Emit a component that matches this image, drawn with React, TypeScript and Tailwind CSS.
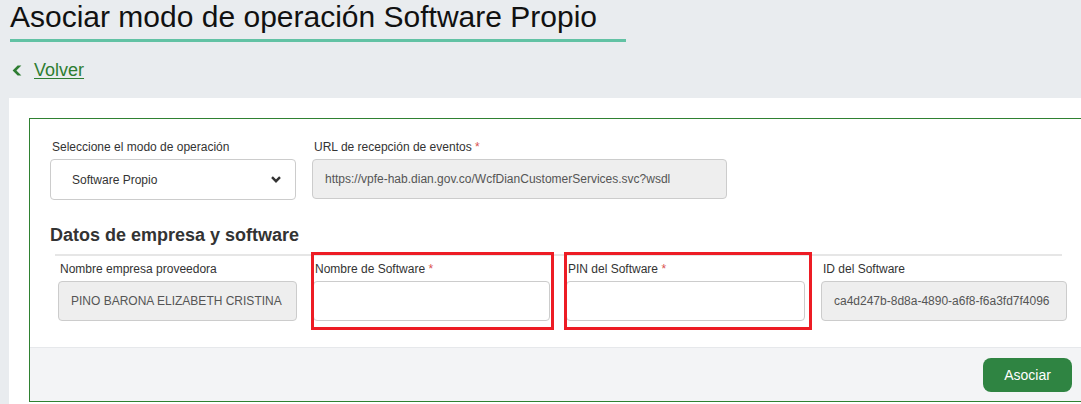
import React from 'react';

type Field = {
  label: string;
  required?: boolean;
  value?: string;
  disabled?: boolean;
  width: string;
  marked?: string;
};

const fields: Field[] = [
  { label: 'Nombre empresa proveedora', value: 'PINO BARONA ELIZABETH CRISTINA', disabled: true, width: 'w-[239px]' },
  { label: 'Nombre de Software', required: true, width: 'w-[237px]', marked: 'w-[243px]' },
  { label: 'PIN del Software', required: true, width: 'w-[239px]', marked: 'w-[248px]' },
  { label: 'ID del Software', value: 'ca4d247b-8d8a-4890-a6f8-f6a3fd7f4096', disabled: true, width: 'w-[246px]' },
];

function Label({ text, required }: { text: string; required?: boolean }) {
  return (
    <div className="h-[17px] leading-[17px] mb-[3px] pl-[2px] text-[12px] text-[#333]">
      {text}
      {required && <span className="text-[#d9534f]"> *</span>}
    </div>
  );
}

function Input({ value, disabled, width }: { value?: string; disabled?: boolean; width: string }) {
  return (
    <div
      className={`${width} h-[40px] flex items-center px-3 rounded-[4px] border border-[#cccccc] text-[12px] text-[#555] ${
        disabled ? 'bg-[#eeeeee]' : 'bg-white'
      }`}
    >
      <span className="whitespace-nowrap">{value}</span>
    </div>
  );
}

export default function App() {
  return (
    <div className="w-full h-[404px] overflow-hidden bg-[#e9ecef] font-['Liberation_Sans',Arial,sans-serif]">
      <h1 className="h-[33px] leading-[33px] pl-[10px] text-[30px] text-[#111]">
        Asociar modo de operación Software Propio
      </h1>
      <div className="ml-[10px] mt-[6px] w-[616px] h-[3px] bg-[#62c2a4]" />

      <div className="mt-[18px] h-[20px] flex items-center pl-[12px] gap-[12px]">
        <svg width="10" height="11" viewBox="0 0 10 11" className="shrink-0">
          <polygon points="0.6,5.5 5.6,0.5 9.4,0.5 4.4,5.5 9.4,10.5 5.6,10.5" fill="#2e7d32" />
        </svg>
        <a className="text-[18px] leading-[20px] text-[#2e7d32] underline underline-offset-2">Volver</a>
      </div>

      <div className="mt-[18px] ml-[9px] h-[400px] bg-white pt-[20px] pl-[20px]">
        <div className="w-[1060px] border border-[#2f8132]">
          <div className="pt-[20px] pl-[20px] flex gap-4">
            <div>
              <Label text="Seleccione el modo de operación" />
              <div className="w-[246px] h-[41px] flex items-center justify-between pl-[21px] pr-[14px] rounded-[4px] border border-[#cccccc] bg-white text-[12px] text-[#333]">
                <span>Software Propio</span>
                <svg width="10" height="7" viewBox="0 0 10 7">
                  <path d="M1 1.2 L5 5.2 L9 1.2" fill="none" stroke="#333" strokeWidth="2.4" />
                </svg>
              </div>
            </div>
            <div>
              <Label text="URL de recepción de eventos" required />
              <Input
                value="https://vpfe-hab.dian.gov.co/WcfDianCustomerServices.svc?wsdl"
                disabled
                width="w-[415px]"
              />
            </div>
          </div>

          <h2 className="mt-[25px] pl-[20px] h-[20px] leading-[20px] text-[18px] font-bold text-[#333]">
            Datos de empresa y software
          </h2>
          <div className="mt-[9px] ml-[25px] w-[1007px] h-[2px] bg-[#e6e6e6]" />

          <div className="mt-[5px] pl-[28px] flex gap-4">
            {fields.map((f) => (
              <div key={f.label} className="relative">
                <Label text={f.label} required={f.required} />
                <Input value={f.value} disabled={f.disabled} width={f.width} />
                {f.marked && (
                  <div
                    className={`absolute -left-[2px] -top-[9px] ${f.marked} h-[78px] border-[3px] border-[#ed1c24] pointer-events-none`}
                  />
                )}
              </div>
            ))}
          </div>

          <div className="mt-[26px] border-t border-[#e6e8eb] bg-[#f3f4f6] pt-[10px] pb-[9px] pr-[16px] flex justify-end">
            <button
              type="button"
              className="w-[89px] h-[34px] rounded-[8px] bg-[#2f8442] text-white text-[14px]"
            >
              Asociar
            </button>
          </div>
        </div>
      </div>
    </div>
  );
}
